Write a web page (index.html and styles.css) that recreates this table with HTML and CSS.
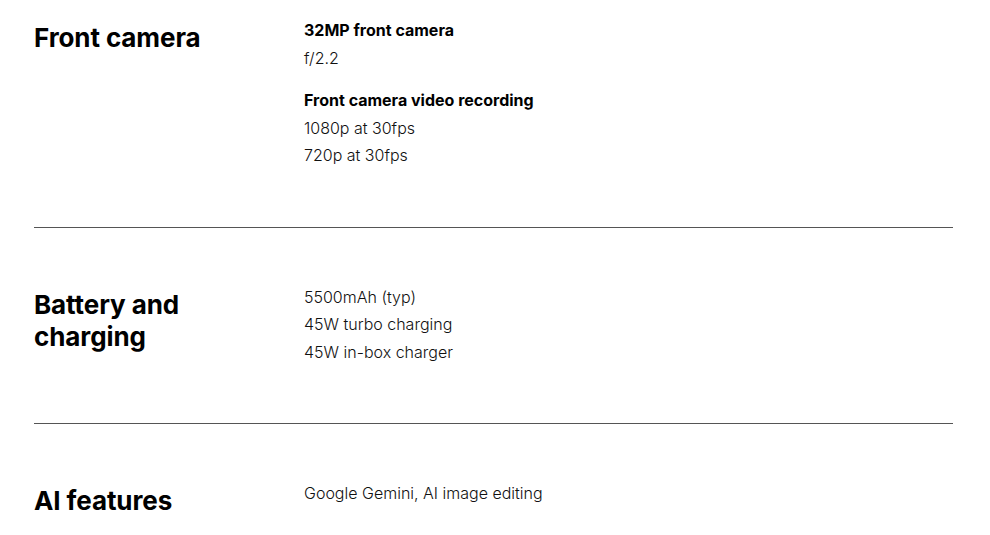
FILE: index.html
```html
<!DOCTYPE html>
<html lang="en">
<head>
<meta charset="utf-8">
<link rel="stylesheet" href="styles.css">
</head>
<body>
<main class="specs">
  <section class="spec-row first">
    <h2 class="spec-title">Front camera</h2>
    <div class="spec-body">
      <div class="spec-group">
        <h3 class="spec-sub">32MP front camera</h3>
        <p class="spec-line">f/2.2</p>
      </div>
      <div class="spec-group">
        <h3 class="spec-sub">Front camera video recording</h3>
        <p class="spec-line">1080p at 30fps</p>
        <p class="spec-line">720p at 30fps</p>
      </div>
    </div>
  </section>
  <section class="spec-row">
    <h2 class="spec-title">Battery and<br>charging</h2>
    <div class="spec-body">
      <div class="spec-group">
        <p class="spec-line">5500mAh (typ)</p>
        <p class="spec-line">45W turbo charging</p>
        <p class="spec-line">45W in-box charger</p>
      </div>
    </div>
  </section>
  <section class="spec-row">
    <h2 class="spec-title">AI features</h2>
    <div class="spec-body">
      <div class="spec-group">
        <p class="spec-line">Google Gemini, AI image editing</p>
      </div>
    </div>
  </section>
</main>
</body>
</html>
```

FILE: styles.css
```css
* { box-sizing: border-box; }
html, body { margin: 0; padding: 0; background: #fff; }
body {
  font-family: Inter, "Noto Sans", "Liberation Sans", sans-serif;
  color: #000;
}
.specs {
  padding: 0 37px 0 34px;
}
.spec-row {
  display: grid;
  grid-template-columns: 270px 1fr;
  padding: 56px 0 57px;
  border-top: 1px solid #555;
}
.spec-row.first {
  border-top: none;
  padding-top: 17px;
}
.spec-title {
  margin: 5px 0 0;
  font-size: 26px;
  line-height: 32px;
  font-weight: 700;
  letter-spacing: -0.1px;
}
.spec-body {
  display: flex;
  flex-direction: column;
  gap: 15px;
}
.spec-sub {
  margin: 0;
  font-size: 16px;
  line-height: 27.5px;
  font-weight: 700;
}
.spec-line {
  margin: 0;
  font-size: 16px;
  line-height: 27.5px;
  font-weight: 300;
  color: #111;
}
```
